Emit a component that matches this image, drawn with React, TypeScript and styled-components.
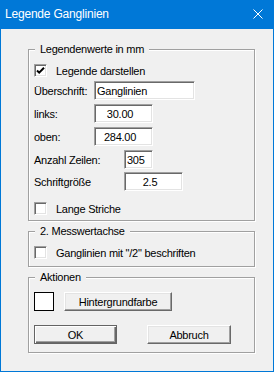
import React from "react";
import styled, { createGlobalStyle, css } from "styled-components";

const GlobalStyle = createGlobalStyle`
  html, body { margin: 0; padding: 0; background: #f0f0f0; }
  * { box-sizing: border-box; }
`;

const uiFont = `"Liberation Sans", Arial, sans-serif`;

const Window = styled.div`
  width: 274px;
  height: 372px;
  border: 1px solid #0078d7;
  border-top: none;
  background: #f0f0f0;
  display: flex;
  flex-direction: column;
  font-family: ${uiFont};
  font-size: 11px;
  letter-spacing: -0.25px;
  color: #000;
`;

const TitleBar = styled.div`
  height: 29px;
  margin: 0 -1px;
  background: #0078d7;
  display: flex;
  align-items: center;
  justify-content: space-between;
  padding: 0 11px 1px 5px;
`;

const TitleText = styled.span`
  color: #fff;
  font-size: 12px;
  letter-spacing: -0.2px;
`;

const CloseIcon = styled.svg`
  display: block;
  width: 10px;
  height: 10px;
`;

const Content = styled.div`
  display: flex;
  flex-direction: column;
  gap: 10px;
  padding: 20px 0 0 27px;
`;

const GroupBox = styled.div<{ $height: number }>`
  position: relative;
  width: 227px;
  height: ${(p) => p.$height}px;
  border: 1px solid #a0a0a0;
  box-shadow: inset 1px 1px 0 #fff, 1px 1px 0 #fff;
  padding: 0 0 0 5px;
  display: flex;
  flex-direction: column;
`;

const Legend = styled.span`
  position: absolute;
  top: -7px;
  left: 6px;
  padding: 0 5px;
  line-height: 13px;
  background: #f0f0f0;
`;

const Row = styled.div<{ $mt: number; $h?: number }>`
  display: flex;
  align-items: center;
  margin-top: ${(p) => p.$mt}px;
  height: ${(p) => p.$h ?? 19}px;
`;

const Label = styled.span<{ $w: number }>`
  width: ${(p) => p.$w}px;
  flex: none;
  white-space: nowrap;
`;

const sunken = css`
  border: 1px solid;
  border-color: #a0a0a0 #fff #fff #a0a0a0;
  box-shadow: inset 1px 1px 0 #696969, inset -1px -1px 0 #e3e3e3;
  background: #fff;
`;

const Field = styled.input<{ $w: number; $align?: "left" | "center" }>`
  ${sunken};
  width: ${(p) => p.$w}px;
  height: 19px;
  margin: 0;
  font-family: ${uiFont};
  font-size: 11px;
  letter-spacing: -0.25px;
  color: #000;
  outline: none;
  text-align: ${(p) => p.$align ?? "left"};
  padding: ${(p) => (p.$align === "center" ? "0 9px 0 2px" : "0 2px")};
`;

const Box = styled.span`
  ${sunken};
  width: 13px;
  height: 13px;
  flex: none;
  display: flex;
  align-items: center;
  justify-content: center;
  margin-right: 9px;
`;

const Swatch = styled.span`
  width: 20px;
  height: 19px;
  border: 1px solid #000;
  background: #fff;
  flex: none;
  margin-right: 10px;
`;

const Button = styled.button<{ $w: number; $default?: boolean }>`
  width: ${(p) => p.$w}px;
  height: 19px;
  margin: 0;
  padding: 0;
  flex: none;
  background: #f0f0f0;
  font-family: ${uiFont};
  font-size: 11px;
  letter-spacing: -0.25px;
  color: #000;
  border: 1px solid;
  border-color: #fff #696969 #696969 #fff;
  box-shadow: inset -1px -1px 0 #a0a0a0, inset 1px 1px 0 #e3e3e3;
  ${(p) =>
    p.$default &&
    css`
      border-color: #646464;
      box-shadow: inset 1px 1px 0 #fff, inset -1px -1px 0 #696969,
        inset -2px -2px 0 #a0a0a0;
    `}
`;

const ButtonRow = styled(Row)`
  gap: 30px;
`;

function Check({ checked }: { checked?: boolean }) {
  return (
    <Box>
      {checked && (
        <svg width="9" height="9" viewBox="0 0 9 9">
          <path d="M1 4.5 L3.2 6.7 L8 1.8" fill="none" stroke="#000" strokeWidth="2" />
        </svg>
      )}
    </Box>
  );
}

export default function App() {
  return (
    <>
      <GlobalStyle />
      <Window>
        <TitleBar>
          <TitleText>Legende Ganglinien</TitleText>
          <CloseIcon viewBox="0 0 10 10">
            <path d="M0.5 0.5 L9.5 9.5 M9.5 0.5 L0.5 9.5" stroke="#fff" strokeWidth="1" />
          </CloseIcon>
        </TitleBar>
        <Content>
          <GroupBox $height={172}>
            <Legend>Legendenwerte in mm</Legend>
            <Row $mt={14} $h={13}>
              <Check checked />
              <span>Legende darstellen</span>
            </Row>
            <Row $mt={4}>
              <Label $w={60}>Überschrift:</Label>
              <Field $w={101} readOnly value="Ganglinien" />
            </Row>
            <Row $mt={4}>
              <Label $w={60}>links:</Label>
              <Field $w={59} $align="center" readOnly value="30.00" />
            </Row>
            <Row $mt={4}>
              <Label $w={60}>oben:</Label>
              <Field $w={59} $align="center" readOnly value="284.00" />
            </Row>
            <Row $mt={4}>
              <Label $w={90}>Anzahl Zeilen:</Label>
              <Field $w={29} readOnly value="305" />
            </Row>
            <Row $mt={3}>
              <Label $w={90}>Schriftgröße</Label>
              <Field $w={59} $align="center" readOnly value="2.5" />
            </Row>
            <Row $mt={11} $h={13}>
              <Check />
              <span>Lange Striche</span>
            </Row>
          </GroupBox>
          <GroupBox $height={36}>
            <Legend>2. Messwertachse</Legend>
            <Row $mt={14} $h={13}>
              <Check />
              <span>Ganglinien mit "/2" beschriften</span>
            </Row>
          </GroupBox>
          <GroupBox $height={76}>
            <Legend>Aktionen</Legend>
            <Row $mt={14}>
              <Swatch />
              <Button $w={108}>Hintergrundfarbe</Button>
            </Row>
            <ButtonRow $mt={14}>
              <Button $w={83} $default>
                OK
              </Button>
              <Button $w={84}>Abbruch</Button>
            </ButtonRow>
          </GroupBox>
        </Content>
      </Window>
    </>
  );
}
